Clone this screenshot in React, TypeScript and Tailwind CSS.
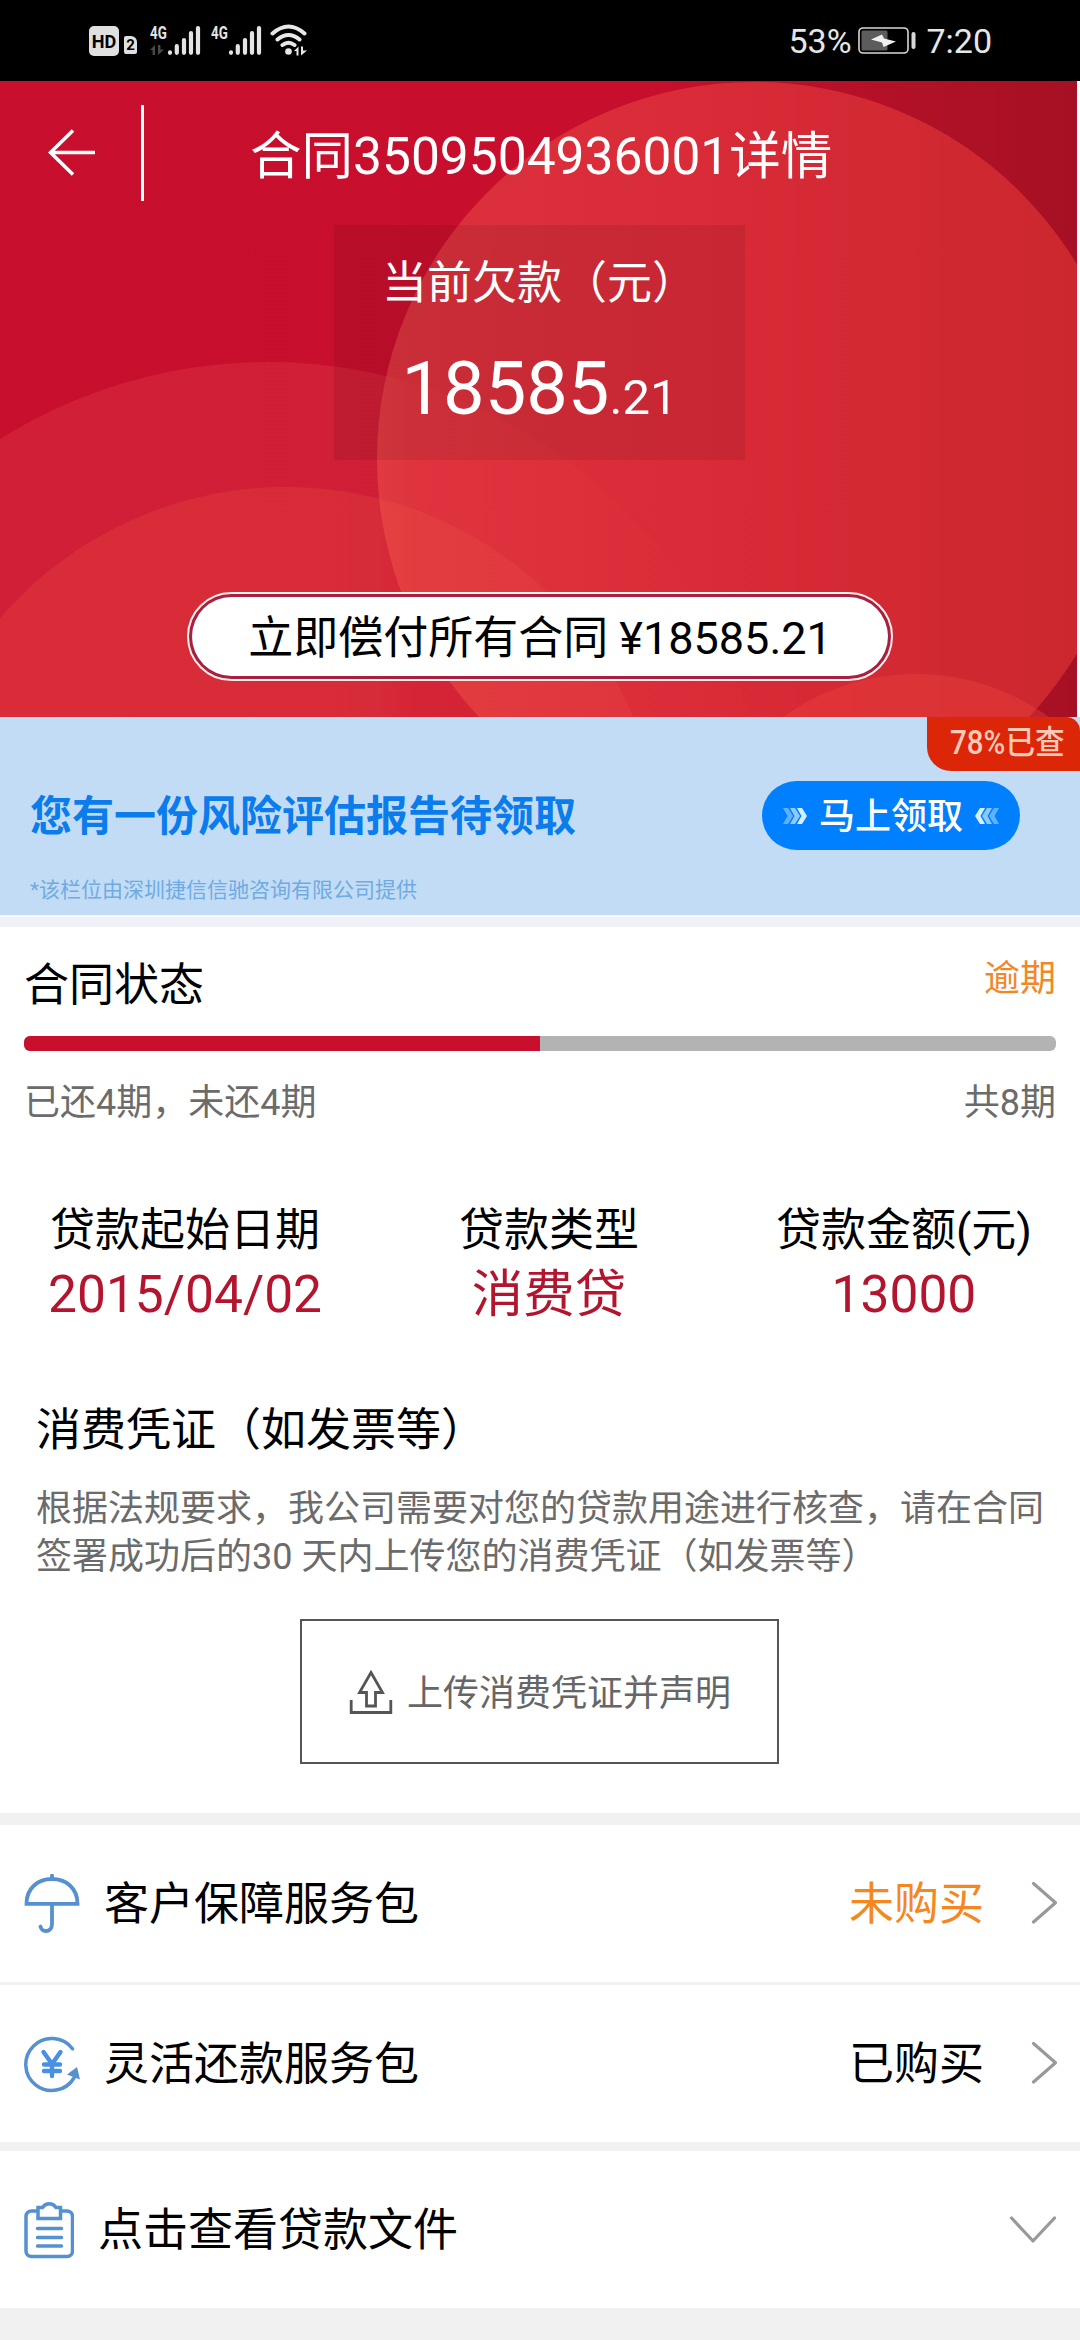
import type { ReactNode } from "react";

const loanInfo = [
    { label: "贷款起始日期", value: "2015/04/02" },
    { label: "贷款类型", value: "消费贷" },
    { label: "贷款金额(元)", value: "13000" }
];

function SignalBars() {
    return (
        <svg width="34" height="32" viewBox="0 0 34 32" stroke="#e4e4e4" strokeWidth="4.2" strokeLinecap="round">
            <path d="M3 28.4v0.4M9.8 22.2v6.6M17 16v12.8M24 9v19.8M31 4v24.8" />
        </svg>
    );
}

function DataArrows({ color }: { color: string }) {
    return (
        <svg width="14" height="10" viewBox="0 0 14 10" fill={color}>
            <path d="M0 5L5 0V10H2.6V5ZM8 0H10.4V4.6H14L8 10Z" />
        </svg>
    );
}

function Network({ data }: { data?: boolean }) {
    return (
        <div className="flex h-[32px]">
            <div className="flex w-[17px] flex-col justify-between pb-px">
                <span className="flex h-[16px] w-[26px] origin-left scale-x-[0.74] items-center text-[18px] leading-[21px] font-bold text-[#e4e4e4]">4G</span>
                {data && <DataArrows color="#4a4a4a" />}
            </div>
            <SignalBars />
        </div>
    );
}

function WifiIcon() {
    return (
        <svg width="38" height="32" viewBox="0 0 38 32" fill="none" stroke="#e8e8e8" strokeWidth="4" strokeLinecap="round">
            <path d="M2.5 9.5Q18.5 -4.5 34.5 9.5M7.5 15.5Q18.5 6.5 29.5 15.5M12.5 21Q18.5 16.5 24.5 21" />
            <circle cx="18.5" cy="27.5" r="3.3" fill="#e8e8e8" stroke="none" />
            <path d="M24 27l4.5-4.5v9h-2v-4.5zM31 22.5h2v4h4l-6 5z" fill="#e8e8e8" stroke="none" />
        </svg>
    );
}

function StatusBar() {
    return (
        <div className="flex h-[81px] justify-between bg-black pr-[88px] pl-[89px] text-[#e6e6e6]">
            <div className="flex pt-[24px]">
                <div className="mt-[2px] flex h-[30px] w-[30px] items-center justify-center rounded-[5px] bg-[#e0e0e0]">
                    <span className="scale-x-[0.95] text-[19px] leading-none font-bold text-black">HD</span>
                </div>
                <div className="mt-[12px] ml-[5px] flex h-[18px] w-[13px] items-center justify-center rounded-[2px] rounded-tr-[6px] bg-[#e0e0e0]">
                    <span className="text-[15px] leading-none font-bold text-black">2</span>
                </div>
                <div className="ml-[13px] flex gap-[10px]">
                    <Network data />
                    <Network />
                </div>
                <div className="ml-[8px]">
                    <WifiIcon />
                </div>
            </div>
            <div className="flex h-[82px] items-center text-[34px] leading-none">
                <span className="w-[70px]">53%</span>
                <svg width="60" height="30" viewBox="0 0 60 30" fill="none">
                    <rect x="1" y="2" width="49" height="25" rx="4" stroke="#d8d8d8" strokeWidth="1.6" />
                    <rect x="3.5" y="4.5" width="26" height="20" rx="1.5" fill="#5c5c5c" />
                    <path d="M13 13.5L24 8.5L26 12.5L38 15.5L25.5 21L24 16.5Z" fill="#f0f0f0" />
                    <rect x="53.5" y="6" width="4" height="17" rx="2" fill="#d8d8d8" />
                </svg>
                <span className="ml-[8px]">7:20</span>
            </div>
        </div>
    );
}

function HeroBackdrop() {
    return (
        <svg className="absolute inset-0" width="1077" height="636" viewBox="0 81 1077 636">
            <defs>
                <linearGradient id="base" x1="0" x2="1077" y1="0" y2="0" gradientUnits="userSpaceOnUse">
                    <stop offset="0" stopColor="#c8102e" />
                    <stop offset="0.6" stopColor="#c70f2d" />
                    <stop offset="0.85" stopColor="#b01126" />
                    <stop offset="1" stopColor="#a71024" />
                </linearGradient>
                <linearGradient id="ring" x1="377" x2="1077" y1="0" y2="0" gradientUnits="userSpaceOnUse">
                    <stop offset="0" stopColor="#dc323d" />
                    <stop offset="0.45" stopColor="#d92b38" />
                    <stop offset="1" stopColor="#cc272e" />
                </linearGradient>
                <linearGradient id="glow" x1="377" x2="773" y1="0" y2="0" gradientUnits="userSpaceOnUse">
                    <stop offset="0" stopColor="#f05a58" stopOpacity="0.2" />
                    <stop offset="0.1" stopColor="#f04444" stopOpacity="0.14" />
                    <stop offset="1" stopColor="#f04040" stopOpacity="0.04" />
                </linearGradient>
                <linearGradient id="glowInner" x1="300" x2="633" y1="0" y2="0" gradientUnits="userSpaceOnUse">
                    <stop offset="0" stopColor="#f86440" stopOpacity="0.2" />
                    <stop offset="1" stopColor="#f45a54" stopOpacity="0.16" />
                </linearGradient>
            </defs>
            <rect y="81" width="1077" height="636" fill="url(#base)" />
            <circle cx="754" cy="459" r="377" fill="url(#ring)" />
            <circle cx="268" cy="867" r="505" fill="url(#glow)" />
            <circle cx="286" cy="864" r="377" fill="url(#glowInner)" />
            <circle cx="916" cy="901" r="227" fill="#f04840" fillOpacity="0.35" />
        </svg>
    );
}

function Hero() {
    return (
        <div className="relative h-[636px] w-[1077px] overflow-hidden text-white">
            <HeroBackdrop />
            <div className="relative flex flex-col">
                <div className="flex h-[144px] items-center">
                    <svg className="ml-[47px]" width="50" height="48" viewBox="0 0 50 48" fill="none" stroke="#fff" strokeWidth="3.5">
                        <path d="M48 23.5H3M26 1.5L3.5 23.5L26 45.5" />
                    </svg>
                    <div className="ml-[44px] h-[96px] w-[3px] bg-white" />
                    <h1 className="ml-[106px] pt-[8px] text-[51.5px] leading-[60px] whitespace-nowrap">合同3509504936001详情</h1>
                </div>
                <div className="ml-[334px] flex h-[235px] w-[411px] flex-col items-center bg-black/8">
                    <p className="mt-[32px] text-[45px] leading-[54px] whitespace-nowrap">当前欠款（元）</p>
                    <p className="mt-[34px] text-[74px] leading-[88px]">
                        18585<span className="text-[49px]">.21</span>
                    </p>
                </div>
                <div className="mt-[132px] ml-[187px] h-[89px] w-[706px] rounded-[45px] border-2 border-[#fff0ee] bg-[#a8203e] p-[3px]">
                    <button className="flex h-full w-full items-center justify-center rounded-full bg-white pt-[4px] text-[45px] leading-none text-black">
                        立即偿付所有合同 ¥18585.21
                    </button>
                </div>
            </div>
        </div>
    );
}

function TripleChevron({ className }: { className?: string }) {
    return (
        <svg className={className} width="24" height="16" viewBox="0 0 24 16" fill="#d5f0ff">
            <path d="M0 0H5L10 8L5 16H0L4.5 8Z" opacity="0.45" />
            <path d="M7 0H12L17 8L12 16H7L11.5 8Z" opacity="0.65" />
            <path d="M14 0H19L24 8L19 16H14L18.5 8Z" />
        </svg>
    );
}

function Banner() {
    return (
        <div className="relative h-[198px] bg-[#c3dcf5]">
            <div className="flex items-center justify-between pt-[64px] pr-[60px] pl-[30px]">
                <p className="pt-[3px] text-[42px] leading-[66px] font-bold text-[#0b7cec]">您有一份风险评估报告待领取</p>
                <button className="flex h-[69px] w-[258px] items-center justify-center gap-[12px] rounded-full bg-[#0080ff] text-[36px] font-medium text-white">
                    <TripleChevron />
                    <span className="pt-[2px]">马上领取</span>
                    <TripleChevron className="rotate-180" />
                </button>
            </div>
            <p className="mt-[27px] ml-[30px] text-[21px] leading-[26px] text-[#6fabe3]">*该栏位由深圳捷信信驰咨询有限公司提供</p>
            <div className="absolute top-0 right-0 flex h-[54px] w-[153px] rounded-tr-[14px] rounded-bl-[24px] bg-[#dc2608] pl-[23px] text-[29px] leading-[52px] font-medium whitespace-nowrap text-[#ffc9b8]">
                <span className="origin-left scale-x-[1.02] scale-y-[1.15]">78%已查</span>
            </div>
        </div>
    );
}

function ContractStatus() {
    return (
        <section className="px-[24px]">
            <div className="flex h-[109px] justify-between">
                <h2 className="pt-[32px] text-[45px] leading-[54px] text-black">合同状态</h2>
                <span className="pt-[30px] text-[36px] leading-[44px] text-[#f0882a]">逾期</span>
            </div>
            <div className="h-[15px] overflow-hidden rounded-[6px] bg-[#b3b3b3]">
                <div className="h-full w-1/2 bg-[#c8102e]" />
            </div>
            <div className="mt-[30px] flex justify-between text-[36px] leading-[44px] text-[#6b6b6b]">
                <span>已还4期，未还4期</span>
                <span>共8期</span>
            </div>
        </section>
    );
}

function LoanInfo() {
    return (
        <section className="mt-[79px] flex justify-between pr-[48px] pl-[48px]">
            {loanInfo.map((item) => (
                <div key={item.label} className="flex flex-col items-center">
                    <span className="text-[45px] leading-[54px] text-black">{item.label}</span>
                    <span className="mt-[8px] text-[51.5px] leading-[58px] text-[#b3152f]">{item.value}</span>
                </div>
            ))}
        </section>
    );
}

function UploadIcon() {
    return (
        <svg width="44" height="46" viewBox="0 0 44 46" fill="none" stroke="#555" strokeWidth="2.8">
            <path d="M2.2 31V43.5H41.8V31" />
            <path d="M22 3.5L33.5 23.5H26.5V37H17.5V23.5H10.5Z" />
        </svg>
    );
}

function Voucher() {
    return (
        <section className="mt-[80px]">
            <h2 className="ml-[36px] text-[45px] leading-[54px] text-black">消费凭证（如发票等）</h2>
            <p className="mt-[27px] ml-[36px] text-[36px] leading-[48px] text-[#6b6b6b]">
                根据法规要求，我公司需要对您的贷款用途进行核查，请在合同
                <br />
                签署成功后的30 天内上传您的消费凭证（如发票等）
            </p>
            <button className="mt-[38px] ml-[300px] flex h-[145px] w-[479px] items-center border-2 border-[#555] pl-[47px] text-[36px] text-[#666]">
                <UploadIcon />
                <span className="ml-[14px] pt-[4px]">上传消费凭证并声明</span>
            </button>
        </section>
    );
}

function UmbrellaIcon() {
    return (
        <svg width="56" height="60" viewBox="0 0 56 60" fill="none" stroke="#5590d0" strokeWidth="3.8">
            <path d="M2.5 29.8C2.5 14 14 5 28 5S53.5 14 53.5 29.8Z" />
            <path d="M28 5V1.5M28 30V50C28 55 25 57 22 57C19 57 17 55 16.5 52.5" strokeLinecap="round" />
        </svg>
    );
}

function YenCycleIcon() {
    return (
        <svg width="56" height="58" viewBox="0 0 56 58" fill="none" stroke="#5590d0" strokeWidth="3.5" strokeLinecap="round">
            <path d="M48.5 13.8A26 26 0 1 0 50 43" />
            <path d="M53 32L56 44.5L43 39.5Z" fill="#5590d0" stroke="none" />
            <path d="M19.5 17L28 29L36.5 17M28 29V41M20 29.5H36M20 36H36" stroke="#4a90e2" strokeWidth="4.4" />
        </svg>
    );
}

function ClipboardIcon() {
    return (
        <svg width="50" height="58" viewBox="0 0 50 58" fill="none" stroke="#5590d0" strokeWidth="3.5">
            <path d="M14 10H7.5A5.5 5.5 0 0 0 2 15.5V50A5.5 5.5 0 0 0 7.5 55.5H43A5.5 5.5 0 0 0 48.5 50V15.5A5.5 5.5 0 0 0 43 10H36.5" />
            <path d="M14 17.5V6.5H18.5C22 1.5 28.5 1.5 32 6.5H36.5V17.5Z" />
            <path d="M13.5 27.5H37.5M13.5 36.5H37.5M13.5 45H37.5" strokeLinecap="round" />
        </svg>
    );
}

function Chevron({ down }: { down?: boolean }) {
    return (
        <svg width="48" height="48" viewBox="0 0 48 48" fill="none" stroke="#999" strokeWidth="3.2" strokeLinecap="round" strokeLinejoin="round">
            <path d={down ? "M2.5 12L24 35L45.5 12" : "M24.5 3.5L46.5 22.7L24.5 42"} />
        </svg>
    );
}

interface ServiceRowProps {
    icon: ReactNode;
    title: string;
    status?: ReactNode;
    down?: boolean;
}

function ServiceRow({ icon, title, status, down }: ServiceRowProps) {
    return (
        <div className="flex h-[157px] items-center bg-white pr-[23px] pl-[24px] text-[45px] text-black">
            {icon}
            <span className="ml-[24px] flex-1 pt-[3px]">{title}</span>
            <span className="mr-[25px] pt-[3px]">{status}</span>
            <Chevron down={down} />
        </div>
    );
}

export default function App() {
    return (
        <div className="h-[2340px] w-[1080px] overflow-hidden bg-white font-['Roboto','Noto_Sans_CJK_SC',sans-serif]">
            <StatusBar />
            <Hero />
            <Banner />
            <div className="h-[12px] border-t-2 border-[#f7f7f5] bg-[#eff1f6]" />
            <div className="h-[886px] bg-white">
                <ContractStatus />
                <LoanInfo />
                <Voucher />
            </div>
            <div className="flex h-[527px] flex-col bg-[#f1f1f1] pt-[12px]">
                <ServiceRow icon={<UmbrellaIcon />} title="客户保障服务包" status={<span className="text-[#f5871f]">未购买</span>} />
                <div className="h-[3px]" />
                <ServiceRow icon={<YenCycleIcon />} title="灵活还款服务包" status="已购买" />
                <div className="h-[9px]" />
                <ServiceRow icon={<ClipboardIcon />} title="点击查看贷款文件" down />
            </div>
        </div>
    );
}
